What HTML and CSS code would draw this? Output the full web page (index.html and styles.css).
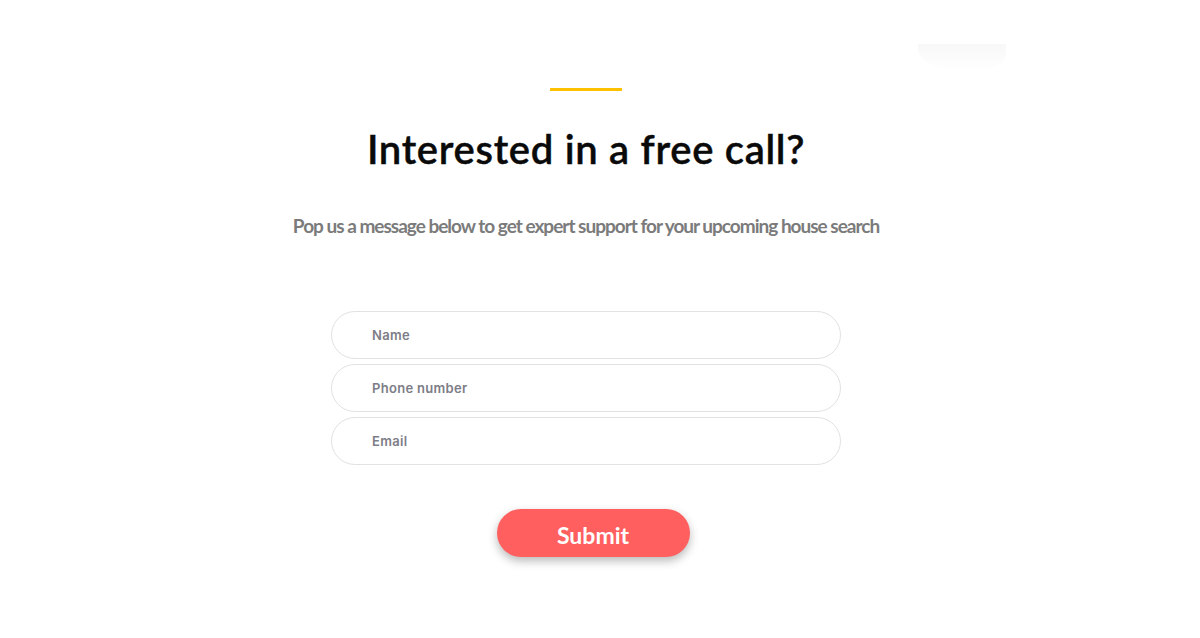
FILE: index.html
```html
<!DOCTYPE html>
<html lang="en">
<head>
<meta charset="utf-8">
<title>Interested in a free call?</title>
<link rel="stylesheet" href="styles.css">
</head>
<body>
<div class="corner-fade"></div>
<main class="page">
  <section class="cta">
    <span class="accent-bar"></span>
    <h1 class="title">Interested in a free call?</h1>
    <p class="subtitle">Pop us a message below to get expert support for your upcoming house search</p>
    <form class="form">
      <input class="field" type="text" placeholder="Name">
      <input class="field" type="tel" placeholder="Phone number">
      <input class="field" type="email" placeholder="Email">
      <button class="submit" type="button">Submit</button>
    </form>
  </section>
</main>
</body>
</html>
```
FILE: styles.css
```css
* { box-sizing: border-box; }
html, body { margin: 0; padding: 0; background: #fff; }
body { font-family: "Lato", "Noto Sans", sans-serif; width: 1200px; height: 638px; overflow: hidden; position: relative; }

.corner-fade {
  position: absolute;
  left: 918px;
  top: 44px;
  width: 88px;
  height: 28px;
  background: linear-gradient(to bottom, #f6f6f6 0%, #fbfbfb 55%, #ffffff 100%);
  border-radius: 0 0 40px 60px / 0 0 20px 26px;
  opacity: 0.8;
}

.page { width: 1172px; display: flex; justify-content: center; }
.cta { display: flex; flex-direction: column; align-items: center; padding-top: 88px; }
.accent-bar { display: block; width: 72px; height: 3px; background: #ffc000; }

.title {
  margin: 34px 0 0;
  font-family: "Lato", "Noto Sans", sans-serif;
  font-weight: 600;
  font-size: 40px;
  line-height: 48px;
  letter-spacing: 0.7px;
  color: #0a0a0a;
  -webkit-text-stroke: 0.4px #0a0a0a;
}

.subtitle {
  margin: 40px 0 0;
  font-family: "Lato", "Noto Sans", sans-serif;
  font-weight: 700;
  font-size: 19px;
  line-height: 26px;
  letter-spacing: -1.0px;
  color: #7b7b7b;
}

.form { margin-top: 72px; display: flex; flex-direction: column; align-items: center; gap: 5px; }
.field {
  width: 510px;
  height: 48px;
  border: 1px solid #e2e2e2;
  border-radius: 24px;
  padding: 0 0 0 40px;
  font-family: "Inter", "Roboto", sans-serif;
  font-weight: 600;
  font-size: 13px;
  letter-spacing: 0.3px;
  color: #333;
  background: #fff;
  outline: none;
}
.field::placeholder { color: #7d7d87; }

.submit {
  margin-top: 39px;
  width: 193px;
  height: 48px;
  padding: 4px 0 0;
  border: none;
  border-radius: 24px;
  background: #ff5f5f;
  color: #fff;
  font-family: "Lato", "Noto Sans", sans-serif;
  font-weight: 700;
  font-size: 23px;
  box-shadow: 0 4px 10px rgba(0,0,0,0.28);
  cursor: pointer;
  position: relative;
  left: 7px;
}
```
